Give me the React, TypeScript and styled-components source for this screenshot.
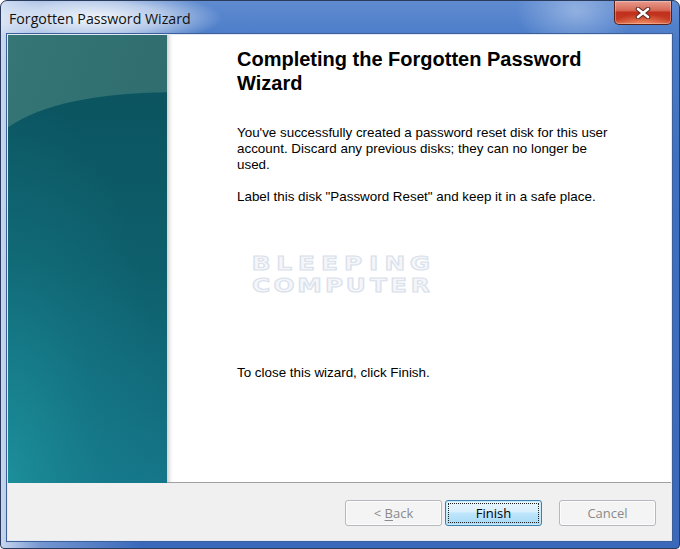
import React from "react";
import styled, { createGlobalStyle } from "styled-components";

const GlobalStyle = createGlobalStyle`
  html, body { margin: 0; padding: 0; background: #ffffff; }
  body { width: 680px; height: 549px; overflow: hidden; }
  * { box-sizing: border-box; }
`;

const Window = styled.div`
  width: 680px;
  height: 549px;
  border: 1px solid #2a3b5c;
  border-radius: 7px 7px 4px 4px;
  display: flex;
  flex-direction: column;
  overflow: hidden;
  background:
    radial-gradient(ellipse 125px 28px at 96px 17px, rgba(255,255,255,0.92), rgba(255,255,255,0.55) 55%, rgba(255,255,255,0) 100%),
    radial-gradient(ellipse 60px 40px at 575px 10px, rgba(190,210,240,0.55), rgba(190,210,240,0) 100%),
    linear-gradient(to right, rgba(225,234,248,0.85) 0px, rgba(225,234,248,0.35) 40px, rgba(225,234,248,0) 140px),
    linear-gradient(to bottom, #5f8bd0 0px, #4a7bc8 40px, #3f6fc0 160px, #3a69bb 100%);
`;

const TitleBar = styled.div`
  height: 34px;
  flex: none;
  display: flex;
  align-items: flex-start;
`;

const TitleText = styled.div`
  align-self: center;
  padding-left: 8px;
  font-family: "Open Sans", "Noto Sans", sans-serif;
  font-size: 14.2px;
  color: #111;
`;

const CloseButton = styled.div`
  margin-left: auto;
  margin-right: 7px;
  width: 58px;
  height: 24px;
  border: 1px solid #5b1f18;
  border-top: none;
  border-radius: 0 0 5px 5px;
  background:
    radial-gradient(ellipse 30px 10px at 50% 100%, rgba(255,160,110,0.7), rgba(255,160,110,0) 100%),
    linear-gradient(to bottom, #e79a8c 0%, #d66a58 40%, #c0301c 50%, #c53a24 80%, #d4603f 100%);
  box-shadow: inset 0 0 0 1px rgba(255,255,255,0.3);
  display: flex;
  align-items: center;
  justify-content: center;
`;

const Client = styled.div`
  flex: 1;
  margin: 0 8px 8px 7px;
  display: flex;
  flex-direction: column;
  background: #ffffff;
  box-shadow: 0 0 0 1px #e2eaf6, 0 0 0 2px #3d5f9a;
`;

const Main = styled.div`
  height: 448px;
  display: flex;
  border-bottom: 1px solid #a0a0a0;
`;

const Banner = styled.div`
  width: 159px;
  flex: none;
  display: flex;
`;

const Shade = styled.div`
  width: 6px;
  flex: none;
  background: linear-gradient(to right, #d2d2d2, #f3f3f3 60%, #ffffff);
`;

const Content = styled.div`
  flex: 1;
  padding: 12px 40px 0 64px;
  display: flex;
  flex-direction: column;
  font-family: "Liberation Sans", Arial, sans-serif;
  color: #000;
`;

const Heading = styled.h1`
  margin: 0;
  font-size: 20px;
  line-height: 24px;
  font-weight: bold;
`;

const Para = styled.p<{ $top: number }>`
  margin: ${(p) => p.$top}px 0 0 0;
  max-width: 380px;
  font-size: 13.4px;
  line-height: 16px;
`;

const Watermark = styled.div`
  margin: 48px 0 0 14px;
  width: 180px;
  display: flex;
  flex-direction: column;
  gap: 2px;
`;

const MarkLine = styled.div`
  display: flex;
  justify-content: space-between;
  padding: 0 3px;
  font-family: "DejaVu Sans", sans-serif;
  font-weight: bold;
  font-size: 19px;
  line-height: 20px;
  color: #f4f6fa;
  -webkit-text-stroke: 1px #d8e0ea;
`;

const MarkLetter = styled.span`
  display: inline-block;
  transform: scaleX(1.3);
`;

const ButtonBar = styled.div`
  flex: 1;
  background: #f0f0f0;
  display: flex;
  justify-content: flex-end;
  align-items: flex-start;
  padding: 17px 15px 0 0;
`;

const Button = styled.div<{ $primary?: boolean; $disabled?: boolean; $gap: number }>`
  width: 97px;
  height: 26px;
  margin-left: ${(p) => p.$gap}px;
  border-radius: 3px;
  border: 1px solid ${(p) => (p.$primary ? "#3c7fb1" : "#b5b9bd")};
  background: ${(p) =>
    p.$primary
      ? "linear-gradient(to bottom, #eaf6fd 0%, #d9f0fc 45%, #bee6fd 50%, #a7d9f5 100%)"
      : "#f4f4f4"};
  box-shadow: inset 0 0 0 1px ${(p) => (p.$primary ? "#c8ebfb" : "#fcfcfc")};
  display: flex;
  align-items: center;
  justify-content: center;
  padding: 2px;
  font-family: "Open Sans", "Noto Sans", sans-serif;
  font-size: 13px;
  color: ${(p) => (p.$disabled ? "#8a8a8a" : "#000")};
`;

const Focus = styled.div`
  flex: 1;
  align-self: stretch;
  border: 1px dotted #222;
  display: flex;
  align-items: center;
  justify-content: center;
`;

const Mnemonic = styled.span`
  text-decoration: underline;
  text-underline-offset: 2px;
`;

const BannerArt = () => (
  <svg width="159" height="448" viewBox="0 0 159 448" preserveAspectRatio="none">
    <defs>
      <linearGradient id="topg" x1="0" y1="0" x2="1" y2="1">
        <stop offset="0" stopColor="#367676" />
        <stop offset="1" stopColor="#2a666b" />
      </linearGradient>
      <linearGradient id="lowg" x1="0" y1="0" x2="0" y2="1">
        <stop offset="0" stopColor="#0b5460" />
        <stop offset="0.45" stopColor="#0e5f6c" />
        <stop offset="1" stopColor="#157689" />
      </linearGradient>
      <radialGradient id="glow" cx="0" cy="1" r="1">
        <stop offset="0" stopColor="#1f97a0" stopOpacity="0.75" />
        <stop offset="0.6" stopColor="#1a8794" stopOpacity="0.25" />
        <stop offset="1" stopColor="#1a8794" stopOpacity="0" />
      </radialGradient>
    </defs>
    <rect x="0" y="0" width="159" height="448" fill="url(#topg)" />
    <path d="M0,92 C35,68 90,58 159,57 L159,448 L0,448 Z" fill="url(#lowg)" />
    <path d="M0,92 C35,68 90,58 159,57 L159,448 L0,448 Z" fill="url(#glow)" />
    <path d="M0,92 C35,68 90,58 159,57" fill="none" stroke="#3f8080" strokeOpacity="0.35" strokeWidth="1" />
  </svg>
);

const CloseGlyph = () => (
  <svg width="16" height="12" viewBox="0 0 16 12">
    <path d="M3,2 L13,10 M13,2 L3,10" stroke="#5a2a24" strokeWidth="4.6" strokeLinecap="round" />
    <path d="M3,2 L13,10 M13,2 L3,10" stroke="#ffffff" strokeWidth="2.6" strokeLinecap="round" />
  </svg>
);

const Letters = ({ word }: { word: string }) => (
  <MarkLine>
    {word.split("").map((c, i) => (
      <MarkLetter key={i}>{c}</MarkLetter>
    ))}
  </MarkLine>
);

export default function App() {
  return (
    <>
      <GlobalStyle />
      <Window>
        <TitleBar>
          <TitleText>Forgotten Password Wizard</TitleText>
          <CloseButton>
            <CloseGlyph />
          </CloseButton>
        </TitleBar>
        <Client>
          <Main>
            <Banner>
              <BannerArt />
            </Banner>
            <Shade />
            <Content>
              <Heading>Completing the Forgotten Password Wizard</Heading>
              <Para $top={30}>
                You've successfully created a password reset disk for this user account. Discard any
                previous disks; they can no longer be used.
              </Para>
              <Para $top={16}>Label this disk "Password Reset" and keep it in a safe place.</Para>
              <Watermark>
                <Letters word="BLEEPING" />
                <Letters word="COMPUTER" />
              </Watermark>
              <Para $top={70}>To close this wizard, click Finish.</Para>
            </Content>
          </Main>
          <ButtonBar>
            <Button $disabled $gap={0}>
              &lt;&nbsp;<Mnemonic>B</Mnemonic>ack
            </Button>
            <Button $primary $gap={3}>
              <Focus>Finish</Focus>
            </Button>
            <Button $disabled $gap={17}>
              Cancel
            </Button>
          </ButtonBar>
        </Client>
      </Window>
    </>
  );
}
